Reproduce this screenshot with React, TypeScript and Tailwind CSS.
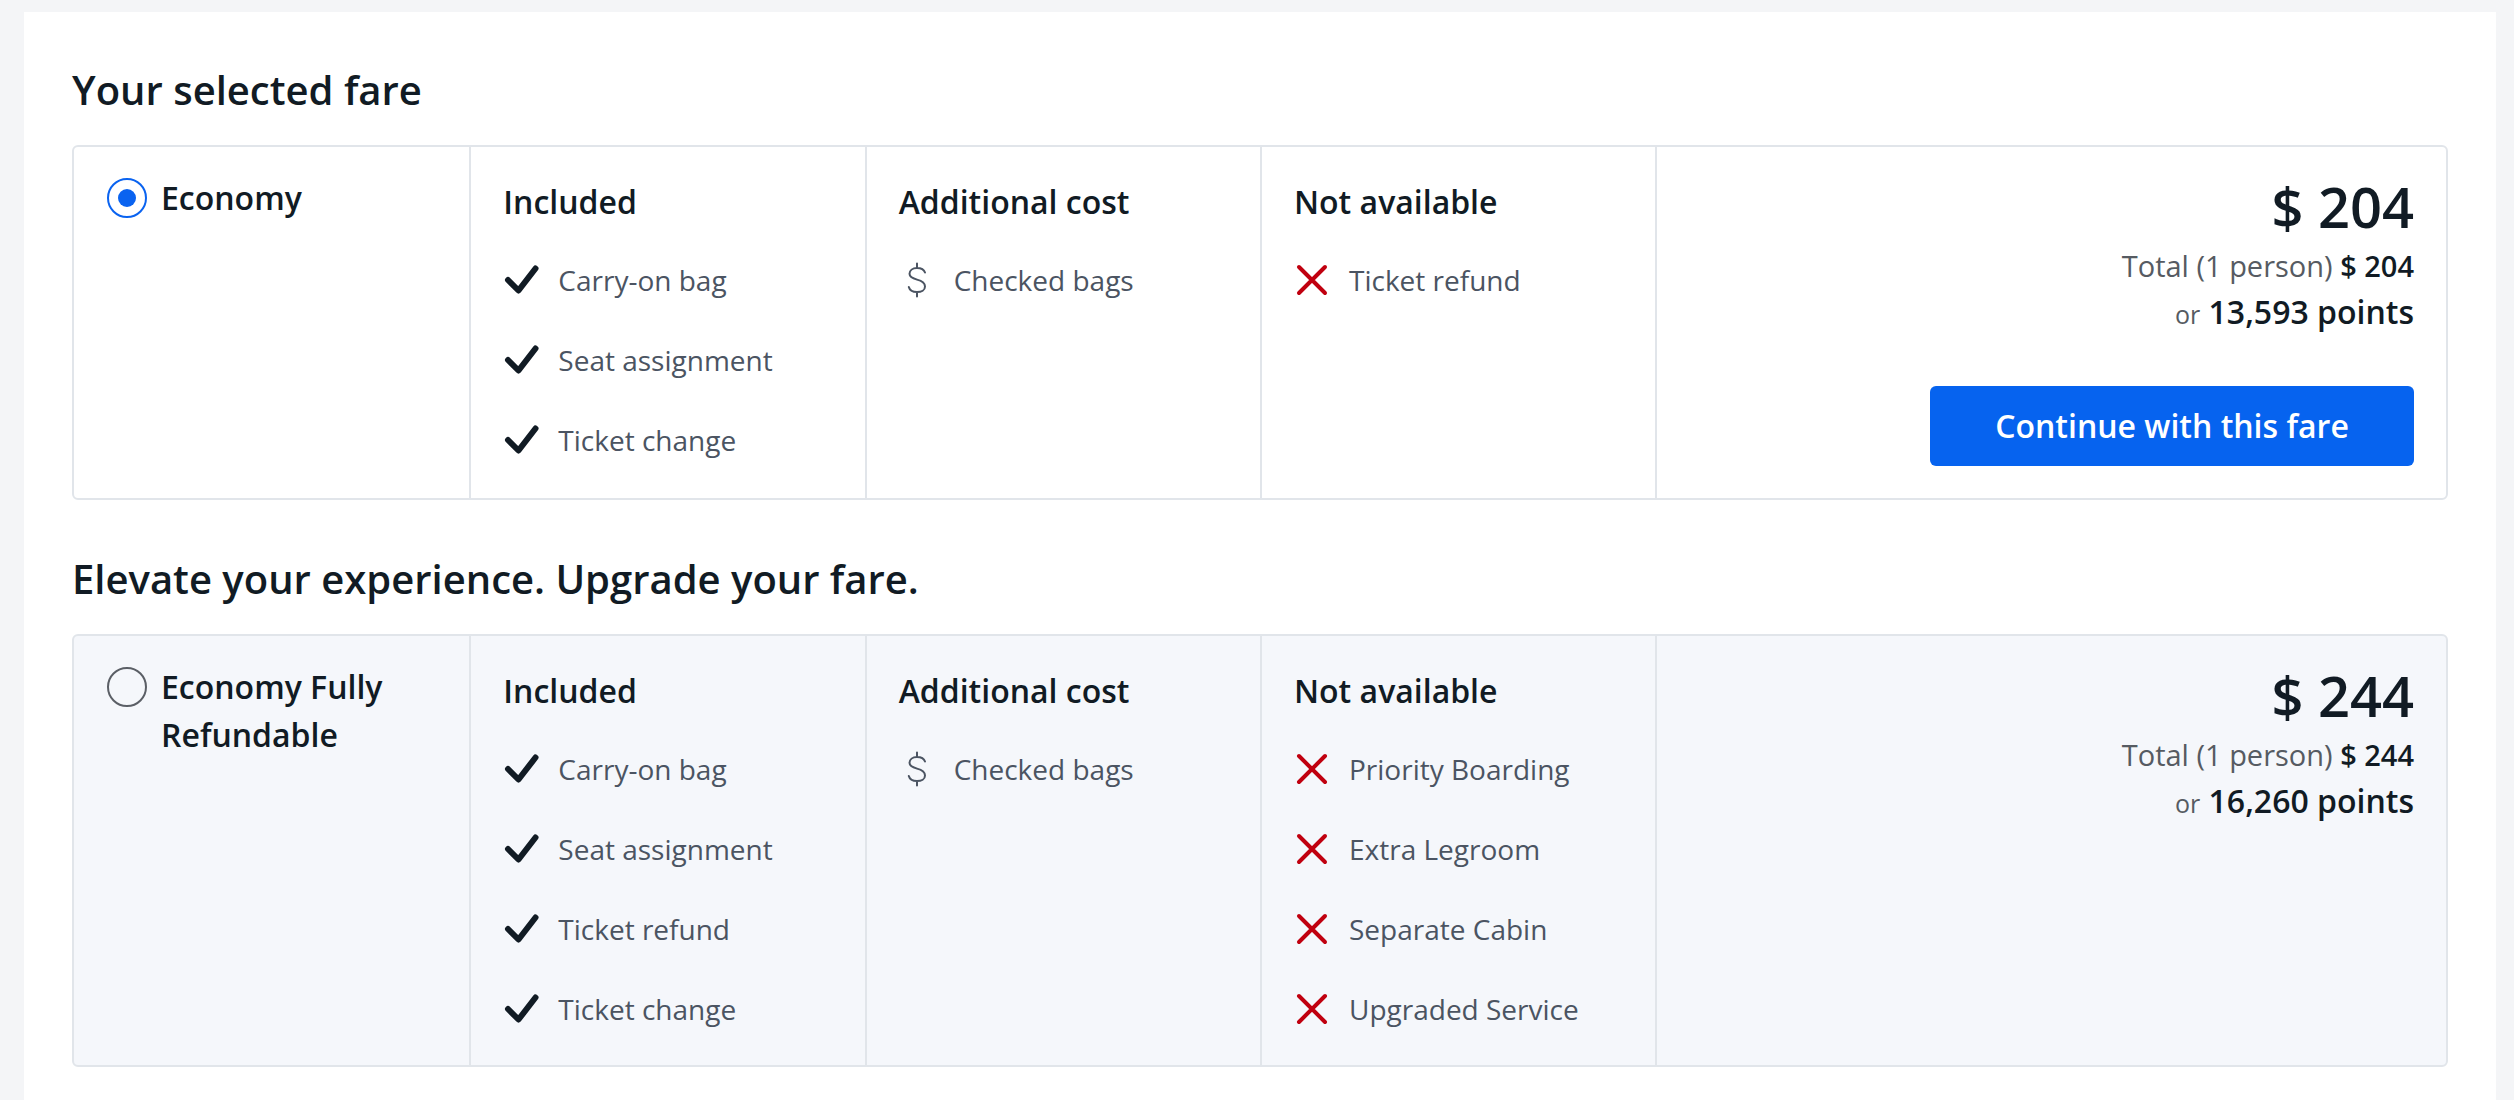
import React from "react";

const Check = () => (
  <svg width="36" height="36" viewBox="0 0 36 36" fill="none">
    <path d="M5 18 L15.5 28.5 L32.5 6.5" stroke="#111b24" strokeWidth="6" strokeLinecap="round" strokeLinejoin="round" />
  </svg>
);

const Cross = () => (
  <svg width="36" height="36" viewBox="0 0 36 36" fill="none">
    <path d="M5 5 L31 31 M31 5 L5 31" stroke="#c0000f" strokeWidth="4" strokeLinecap="round" />
  </svg>
);

const Dollar = () => (
  <svg width="36" height="36" viewBox="0 0 36 36" fill="none">
    <path
      d="M18 1.5 V6 M18 30 V34.5 M26 10.5 C25 7.5 22 6 18 6 C13.5 6 10.5 8.5 10.5 11.8 C10.5 15.2 13.5 16.4 18 17.6 C22.5 18.8 26 20.6 26 24.4 C26 28 22.5 30 18 30 C13.5 30 10.6 28.2 9.8 25"
      stroke="#4b5462"
      strokeWidth="2"
      strokeLinecap="round"
      strokeLinejoin="round"
    />
  </svg>
);

type Kind = "check" | "dollar" | "cross";

const Item = ({ kind, label }: { kind: Kind; label: string }) => (
  <div className="flex h-[48px] items-center gap-[19px]">
    <div className="flex h-[36px] w-[36px] shrink-0 items-center justify-center">
      {kind === "check" ? <Check /> : kind === "dollar" ? <Dollar /> : <Cross />}
    </div>
    <span className="whitespace-nowrap text-[28px] leading-[48px] text-[#4b5462]">{label}</span>
  </div>
);

const FeatureCol = ({ title, kind, items }: { title: string; kind: Kind; items: string[] }) => (
  <div className="border-l-2 border-[#e1e5ea] px-[32px] pt-[31px] pb-[32px]">
    <div className="text-[32px] font-semibold leading-[48px] text-[#111b24]">{title}</div>
    <div className="mt-[30px] flex flex-col gap-[32px]">
      {items.map((t) => (
        <Item key={t} kind={kind} label={t} />
      ))}
    </div>
  </div>
);

const Radio = ({ checked }: { checked: boolean }) =>
  checked ? (
    <div className="mt-[4px] ml-[1px] flex h-[40px] w-[40px] shrink-0 items-center justify-center rounded-full border-[2.5px] border-[#0a63f0]">
      <div className="h-[18px] w-[18px] rounded-full bg-[#0a63f0]" />
    </div>
  ) : (
    <div className="mt-[4px] ml-[1px] h-[40px] w-[40px] shrink-0 rounded-full border-2 border-[#5b5f66]" />
  );

const FareCard = ({
  name,
  checked,
  bg,
  included,
  additional,
  unavailable,
  price,
  points,
  button,
}: {
  name: React.ReactNode;
  checked: boolean;
  bg: string;
  included: string[];
  additional: string[];
  unavailable: string[];
  price: string;
  points: string;
  button?: boolean;
}) => (
  <div className={`grid grid-cols-6 rounded-[6px] border-2 border-[#e1e5ea] ${bg}`}>
    <div className="px-[32px] pt-[27px] pb-[32px]">
      <div className="flex items-start gap-[14px]">
        <Radio checked={checked} />
        <div className="text-[32px] font-semibold leading-[48px] text-[#111b24]">{name}</div>
      </div>
    </div>
    <FeatureCol title="Included" kind="check" items={included} />
    <FeatureCol title="Additional cost" kind="dollar" items={additional} />
    <FeatureCol title="Not available" kind="cross" items={unavailable} />
    <div className="col-span-2 flex flex-col items-end border-l-2 border-[#e1e5ea] px-[32px] pt-[27px] pb-[32px]">
      <div className="text-[56px] font-semibold leading-[64px] text-[#111b24]">{price}</div>
      <div className="mt-[6px] whitespace-nowrap text-[29px] leading-[44px] text-[#565b62]">
        Total (1 person) <span className="font-semibold text-[#111b24]">{price}</span>
      </div>
      <div className="whitespace-nowrap text-[32px] leading-[48px] font-semibold text-[#111b24]">
        <span className="text-[25px] font-normal leading-[1] text-[#565b62]">or</span> {points} points
      </div>
      {button && (
        <button className="mt-[50px] flex h-[80px] w-[484px] items-center justify-center rounded-[6px] bg-[#0663ef] text-[32px] font-semibold text-white">
          Continue with this fare
        </button>
      )}
    </div>
  </div>
);

export default function App() {
  return (
    <div className="min-h-screen bg-[#f4f5f7] pt-[12px] pl-[24px] pr-[18px] font-['Open_Sans','Noto_Sans',sans-serif]">
      <div className="min-h-[1088px] bg-white px-[48px] pt-[54px] pb-[40px]">
        <h1 className="mb-[31px] text-[40px] font-semibold leading-[48px] text-[#111b24]">Your selected fare</h1>
        <FareCard
          name="Economy"
          checked
          bg="bg-white"
          included={["Carry-on bag", "Seat assignment", "Ticket change"]}
          additional={["Checked bags"]}
          unavailable={["Ticket refund"]}
          price="$ 204"
          points="13,593"
          button
        />
        <h2 className="mt-[55px] mb-[31px] text-[40px] font-semibold leading-[48px] text-[#111b24]">
          Elevate your experience. Upgrade your fare.
        </h2>
        <FareCard
          name={
            <>
              Economy Fully
              <br />
              Refundable
            </>
          }
          checked={false}
          bg="bg-[#f5f7fb]"
          included={["Carry-on bag", "Seat assignment", "Ticket refund", "Ticket change"]}
          additional={["Checked bags"]}
          unavailable={["Priority Boarding", "Extra Legroom", "Separate Cabin", "Upgraded Service"]}
          price="$ 244"
          points="16,260"
        />
      </div>
    </div>
  );
}
